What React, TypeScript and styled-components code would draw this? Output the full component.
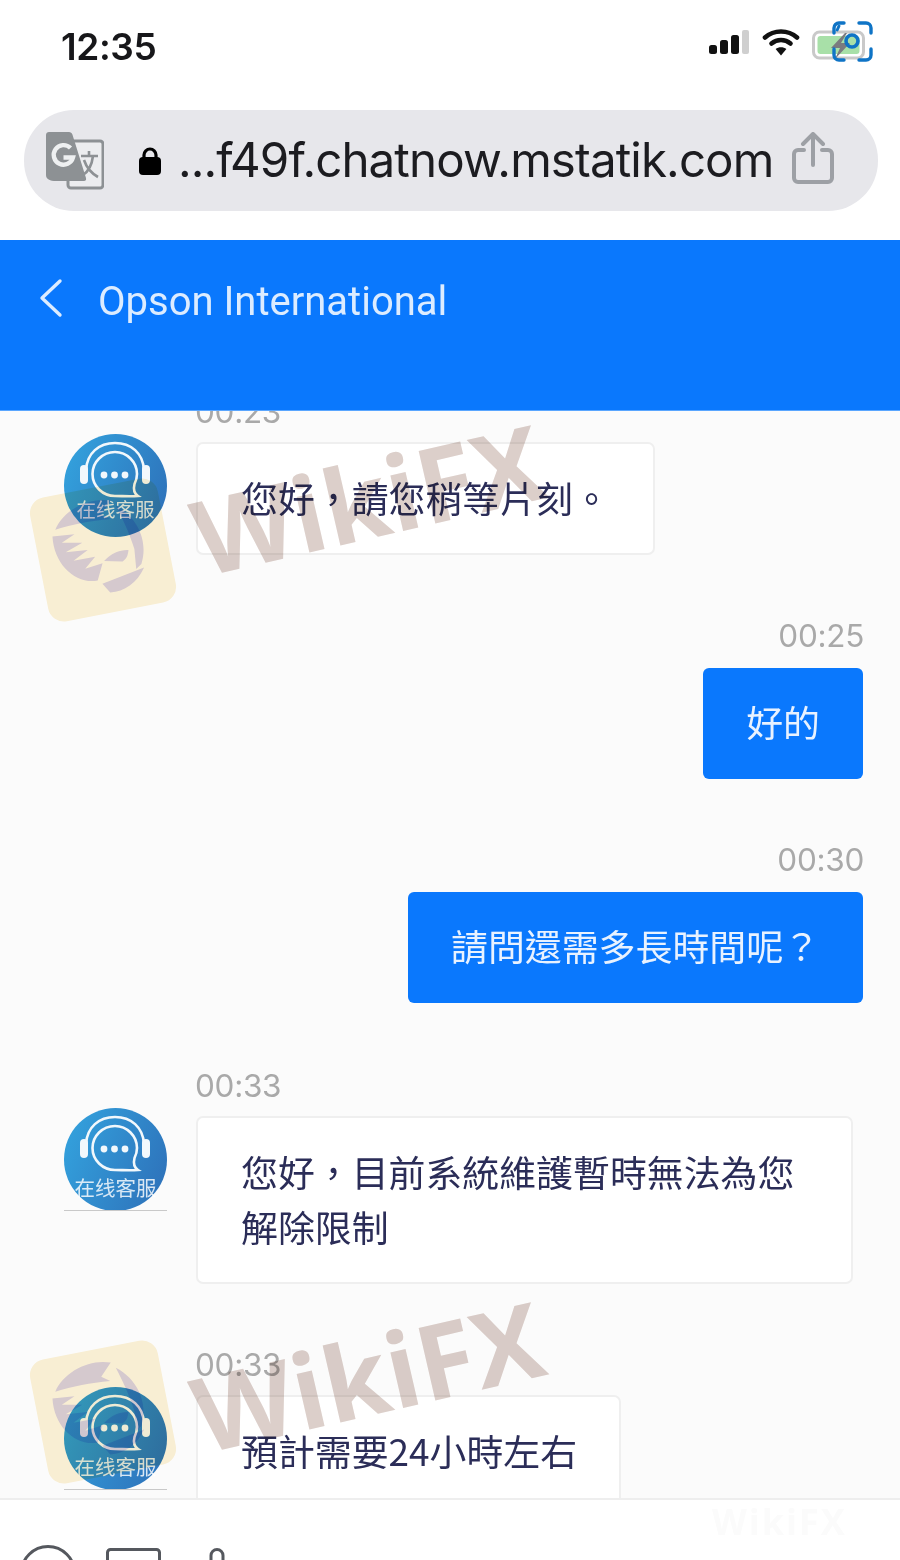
import React from "react";
import styled, { createGlobalStyle } from "styled-components";

const Global = createGlobalStyle`
  html, body { margin: 0; padding: 0; background: #fff; }
  body { font-family: "Inter", "Noto Sans CJK TC", sans-serif; }
`;

const Page = styled.div`
  position: relative;
  width: 900px;
  height: 1560px;
  overflow: hidden;
  display: flex;
  flex-direction: column;
  background: #fff;
`;

const StatusBar = styled.div`
  height: 92px;
  flex: none;
  display: flex;
  align-items: center;
  justify-content: space-between;
  padding: 0 26px 0 61px;
  box-sizing: border-box;
`;

const Clock = styled.span`
  font: 600 37px/1 "Inter", sans-serif;
  letter-spacing: -0.4px;
  color: #17171a;
`;

const StatusIcons = styled.div`
  display: flex;
  align-items: center;
  gap: 12px;
  margin-top: -8px;
`;

const UrlBarWrap = styled.div`
  flex: none;
  height: 148px;
  padding: 18px 22px 29px 24px;
  box-sizing: border-box;
`;

const UrlBar = styled.div`
  height: 101px;
  border-radius: 50px;
  background: #e7e7eb;
  display: flex;
  align-items: center;
  padding: 0 44px 0 22px;
`;

const LockSlot = styled.span`
  flex: none;
  margin-left: 34px;
  display: flex;
`;

const UrlText = styled.span`
  flex: 1;
  margin: -2px 0 0 16px;
  font: 400 47.5px/1 "Inter", sans-serif;
  letter-spacing: -0.9px;
  color: #1c1c20;
  white-space: nowrap;
`;

const ShareSlot = styled.span`
  flex: none;
  display: flex;
  margin-top: -6px;
`;

const Header = styled.header`
  flex: none;
  height: 170px;
  background: #0a78fd;
  display: flex;
  align-items: flex-start;
  padding: 38px 0 0 38px;
  box-sizing: border-box;
  gap: 35px;
`;

const HeaderTitle = styled.h1`
  margin: 1px 0 0 -1px;
  font: 400 40px/46px "Roboto", sans-serif;
  color: #dcecff;
`;

const Chat = styled.main`
  flex: 1;
  min-height: 0;
  overflow: hidden;
  background: #fbfbfb;
  border-top: 1px solid #5aa6ff;
  box-sizing: border-box;
`;

const Feed = styled.div`
  display: flex;
  flex-direction: column;
  gap: 64px;
  margin-top: -16px;
  padding: 0 37px 0 64px;
`;

const AgentRow = styled.div<{ $extra?: number }>`
  display: flex;
  gap: 29px;
  margin-top: ${(p) => p.$extra ?? 0}px;
`;

const MineRow = styled.div`
  display: flex;
  flex-direction: column;
  align-items: flex-end;
`;

const AgentBody = styled.div`
  display: flex;
  flex-direction: column;
  align-items: flex-start;
`;

const Time = styled.time<{ $mine?: boolean }>`
  font: 400 31.5px/34px "Inter", sans-serif;
  color: #a9a9a9;
  letter-spacing: -0.3px;
  margin-bottom: ${(p) => (p.$mine ? 15 : 13)}px;
  margin-left: ${(p) => (p.$mine ? 0 : -1)}px;
  margin-right: ${(p) => (p.$mine ? -1 : 0)}px;
`;

const AgentBubble = styled.div<{ $w: number }>`
  width: ${(p) => p.$w}px;
  box-sizing: border-box;
  padding: 26px 40px 28px 43px;
  background: #fff;
  border: 2px solid #efefef;
  border-radius: 7px;
  font: 400 36.9px/55px "Noto Sans CJK TC", sans-serif;
  color: #2b2d58;
`;

const MineBubble = styled.div`
  box-sizing: border-box;
  padding: 26px 43px 30px;
  background: #0a78fd;
  border-radius: 6px;
  font: 400 36.9px/55px "Noto Sans CJK TC", sans-serif;
  color: #e8f2ff;
  white-space: nowrap;
`;

const AvatarSlot = styled.div`
  flex: none;
  width: 103px;
  margin-top: 39px;
`;

const AvatarDisc = styled.div<{ $cut?: boolean }>`
  position: relative;
  width: 103px;
  height: ${(p) => (p.$cut ? 102 : 103)}px;
  overflow: hidden;
  ${(p) => (p.$cut ? "border-bottom: 1px solid #c9c9c9;" : "")}
  svg { display: block; }
`;

const AvatarLabel = styled.span<{ $size: number; $top: number }>`
  position: absolute;
  left: 0;
  right: 0;
  top: ${(p) => p.$top}px;
  text-align: center;
  font: 400 ${(p) => p.$size}px/26px "Noto Sans CJK SC", sans-serif;
  color: rgba(255, 255, 255, 0.82);
  white-space: nowrap;
`;

const Composer = styled.footer`
  flex: none;
  height: 62px;
  background: #fff;
  border-top: 2px solid #eeeeee;
  box-sizing: border-box;
  padding: 45px 0 0 20px;
  display: flex;
  align-items: flex-start;
  gap: 30px;
  svg { display: block; flex: none; }
`;

const TrayIcon = styled.svg`
  margin-top: 3px;
`;

const MicIcon = styled.svg`
  margin: 3px 0 0 18px;
`;

const WatermarkLayer = styled.div<{ $top: number }>`
  position: absolute;
  left: 0;
  top: ${(p) => p.$top}px;
  width: 600px;
  height: 200px;
  mix-blend-mode: multiply;
  pointer-events: none;
`;

const WatermarkTile = styled.div`
  position: absolute;
  left: 38px;
  top: 17px;
  width: 130px;
  height: 126px;
  background: #fcf2d7;
  border-radius: 16px;
  transform: rotate(-11deg);
  svg { display: block; margin: 8px 0 0 12px; }
`;

const WatermarkText = styled.span<{ $offset: number }>`
  position: absolute;
  left: 190px;
  top: ${(p) => p.$offset}px;
  font: 700 104px/104px "Open Sans", sans-serif;
  color: #dccfca;
  transform: rotate(-13deg);
  transform-origin: 50% 50%;
`;

const FaintMark = styled.span`
  position: absolute;
  left: 712px;
  top: 1502px;
  font: 700 36px/40px "Open Sans", sans-serif;
  color: #fbfbfb;
  letter-spacing: 2px;
`;

const Signal = () => (
  <svg width="42" height="26" viewBox="0 0 42 26">
    <rect x="1" y="16" width="8" height="9" rx="2.5" fill="#111" />
    <rect x="12" y="11" width="8" height="14" rx="2.5" fill="#111" />
    <rect x="23" y="6" width="8" height="19" rx="2.5" fill="#111" />
    <rect x="34" y="1" width="7" height="24" rx="2" fill="#cfcfcf" />
  </svg>
);

const Wifi = () => (
  <svg width="38" height="28" viewBox="0 0 38 28" fill="none" stroke="#111" strokeLinecap="round">
    <path d="M3 9.5C12 1.5 26 1.5 35 9.5" strokeWidth="4.6" />
    <path d="M9.5 15.5C15 10.8 23 10.8 28.5 15.5" strokeWidth="4.6" />
    <path d="M19 27.5l-5.4-6.5c3-2.4 7.8-2.4 10.8 0z" fill="#111" stroke="none" />
  </svg>
);

const BatteryScan = () => (
  <svg width="62" height="42" viewBox="0 0 62 42" fill="none">
    <rect x="1.5" y="11" width="50" height="26" rx="6" fill="#fff" stroke="#c9c9c9" strokeWidth="3" />
    <rect x="5.5" y="15" width="42" height="18" rx="3" fill="#a8e0a8" />
    <path d="M33 12L19 27h9l-5 11 15-16h-9l6-10z" fill="#7b7b7f" />
    <circle cx="40" cy="20" r="6" stroke="#0f74c6" strokeWidth="3.6" />
    <path d="M27 5l-1.800 4" stroke="#0f74c6" strokeWidth="3" strokeLinecap="round" />
    <g stroke="#0f74c6" strokeWidth="3.4" strokeLinecap="round">
      <path d="M22 12V7a5 5 0 0 1 5-5h5" />
      <path d="M47 2h7a5 5 0 0 1 5 5v5" />
      <path d="M59 28v6a5 5 0 0 1-5 5h-7" />
      <path d="M32 39h-5a5 5 0 0 1-5-5v-6" />
    </g>
  </svg>
);

const TranslateIcon = () => (
  <svg width="58" height="58" viewBox="0 0 58 58" fill="none">
    <rect x="22" y="9" width="35" height="47" rx="3" fill="#ecedef" stroke="#8d9194" strokeWidth="3" />
    <path d="M3 0h20c1.500 0 3 1 3.400 2.500L40 46c.5 2-.5 3-2 3H10c-6 0-10-2-10-6V3C0 1.300 1.300 0 3 0z" fill="#8d9194" />
    <path d="M24.500 16a9.800 9.800 0 1 0 2.500 9.500H17.500" stroke="#eef0f1" strokeWidth="4.400" />
    <path d="M35 24h17M43 19v5M37 43c6-4 9-11 10-19M38 28c2 6 7 13 14 17" stroke="#8d9194" strokeWidth="2.600" />
  </svg>
);

const LockIcon = () => (
  <svg width="24" height="30" viewBox="0 0 24 30" fill="none">
    <path d="M6 13V9a6 6 0 0 1 12 0v4" stroke="#000" strokeWidth="3.200" />
    <rect x="1" y="11" width="22" height="18" rx="4" fill="#000" />
  </svg>
);

const ShareIcon = () => (
  <svg width="42" height="52" viewBox="0 0 42 52" fill="none" stroke="#9da0a5" strokeWidth="4" strokeLinecap="round" strokeLinejoin="round">
    <path d="M12 18H6a4 4 0 0 0-4 4v24a4 4 0 0 0 4 4h30a4 4 0 0 0 4-4V22a4 4 0 0 0-4-4h-6" />
    <path d="M21 33V3M11 12l10-10 10 10" />
  </svg>
);

const BackIcon = () => (
  <svg width="26" height="40" viewBox="0 0 26 40" fill="none" stroke="#dcecff" strokeWidth="3.400" strokeLinecap="round" strokeLinejoin="round">
    <path d="M22 3L4 20l18 17" />
  </svg>
);

const Avatar = ({ id, cut, size, top }: { id: string; cut?: boolean; size: number; top: number }) => (
  <AvatarDisc $cut={cut}>
    <svg width="103" height="103" viewBox="0 0 103 103" fill="none">
      <defs>
        <linearGradient id={id} x1="0" y1="0.3" x2="1" y2="0.7">
          <stop offset="0" stopColor="#33a0dc" />
          <stop offset="1" stopColor="#2e73bb" />
        </linearGradient>
      </defs>
      <circle cx="51.500" cy="51.500" r="51.500" fill={`url(#${id})`} />
      <path d="M22 36C23 19 35 9 51 9s28 10 29 27" stroke="#f2f8fc" strokeWidth="2.600" />
      <rect x="16" y="31" width="8" height="19" rx="4" fill="#f2f8fc" />
      <rect x="78" y="31" width="8" height="19" rx="4" fill="#f2f8fc" />
      <path d="M51 18c-12.500 0-22.500 10-22.500 22S38.500 62 51 62c7 0 15 .5 23 0-3-2-5-6-3.500-12 1.500-3 2.500-6.500 2.500-10 0-12-10-22-22-22z" stroke="#f2f8fc" strokeWidth="2.600" />
      <circle cx="40" cy="41" r="3.400" fill="#f2f8fc" />
      <circle cx="50.500" cy="41" r="3.400" fill="#f2f8fc" />
      <circle cx="61" cy="41" r="3.400" fill="#f2f8fc" />
    </svg>
    <AvatarLabel $size={size} $top={top}>在线客服</AvatarLabel>
  </AvatarDisc>
);

const Lion = () => (
  <svg width="100" height="100" viewBox="0 0 100 100" fill="#d9ccd2">
    <path d="M10 26C22 8 50 0 70 8L58 20 66 26C46 24 28 24 10 26z" />
    <path d="M6 32l22 2-14 6 20 4-18 6 22 2-16 8 22 0-12 10 18-2-8 16C20 84 2 60 6 32z" />
    <path d="M74 14c18 14 26 40 14 62l-6 4 2-20c-2-18-6-32-10-46z" />
    <path d="M46 88l44-8c-10 14-24 20-38 18z" />
    <path d="M52 66c8-6 18-8 26-6-2 6-4 8-8 10z" />
  </svg>
);

const Watermark = ({ top, textOffset }: { top: number; textOffset: number }) => (
  <WatermarkLayer $top={top}>
    <WatermarkTile>
      <Lion />
    </WatermarkTile>
    <WatermarkText $offset={textOffset}>WikiFX</WatermarkText>
  </WatermarkLayer>
);

export default function App() {
  return (
    <Page>
      <Global />
      <StatusBar>
        <Clock>12:35</Clock>
        <StatusIcons>
          <Signal />
          <Wifi />
          <BatteryScan />
        </StatusIcons>
      </StatusBar>
      <UrlBarWrap>
        <UrlBar>
          <TranslateIcon />
          <LockSlot>
            <LockIcon />
          </LockSlot>
          <UrlText>...f49f.chatnow.mstatik.com</UrlText>
          <ShareSlot>
            <ShareIcon />
          </ShareSlot>
        </UrlBar>
      </UrlBarWrap>
      <Header>
        <BackIcon />
        <HeaderTitle>Opson International</HeaderTitle>
      </Header>
      <Chat>
        <Feed>
          <AgentRow>
            <AvatarSlot>
              <Avatar id="a1" size={19.500} top={62} />
            </AvatarSlot>
            <AgentBody>
              <Time>00:23</Time>
              <AgentBubble $w={459}>您好，請您稍等片刻。</AgentBubble>
            </AgentBody>
          </AgentRow>
          <MineRow>
            <Time $mine>00:25</Time>
            <MineBubble>好的</MineBubble>
          </MineRow>
          <MineRow>
            <Time $mine>00:30</Time>
            <MineBubble>請問還需多長時間呢？</MineBubble>
          </MineRow>
          <AgentRow $extra={2}>
            <AvatarSlot>
              <Avatar id="a2" cut size={20.500} top={66} />
            </AvatarSlot>
            <AgentBody>
              <Time>00:33</Time>
              <AgentBubble $w={657}>您好，目前系統維護暫時無法為您解除限制</AgentBubble>
            </AgentBody>
          </AgentRow>
          <AgentRow>
            <AvatarSlot>
              <Avatar id="a3" cut size={20.500} top={66} />
            </AvatarSlot>
            <AgentBody>
              <Time>00:33</Time>
              <AgentBubble $w={425}>預計需要24小時左右</AgentBubble>
            </AgentBody>
          </AgentRow>
        </Feed>
      </Chat>
      <Composer>
        <svg width="56" height="56" viewBox="0 0 56 56" fill="none" stroke="#55585e" strokeWidth="3">
          <circle cx="28" cy="28" r="26.500" />
        </svg>
        <TrayIcon width="55" height="40" viewBox="0 0 55 40" fill="none" stroke="#55585e" strokeWidth="3">
          <rect x="1.500" y="1.500" width="52" height="37" rx="3" />
        </TrayIcon>
        <MicIcon width="16" height="30" viewBox="0 0 16 30" fill="none" stroke="#55585e" strokeWidth="3">
          <rect x="2" y="1.500" width="12" height="28" rx="6" />
        </MicIcon>
      </Composer>
      <Watermark top={470} textOffset={-24} />
      <Watermark top={1332} textOffset={-9} />
      <FaintMark>WikiFX</FaintMark>
    </Page>
  );
}
